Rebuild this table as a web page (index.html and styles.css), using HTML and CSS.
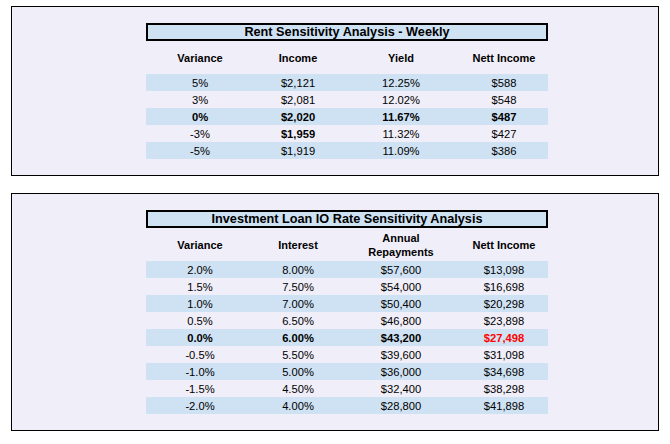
FILE: index.html
```html
<!DOCTYPE html>
<html>
<head>
<meta charset="utf-8">
<link rel="stylesheet" href="styles.css">
</head>
<body>
<div class="page">
  <section class="panel panel-rent">
    <div class="sheet">
      <div class="title">Rent Sensitivity Analysis - Weekly</div>
      <div class="row head">
        <div>Variance</div><div>Income</div><div>Yield</div><div>Nett Income</div>
      </div>
      <div class="row shade"><div>5%</div><div>$2,121</div><div>12.25%</div><div>$588</div></div>
      <div class="row"><div>3%</div><div>$2,081</div><div>12.02%</div><div>$548</div></div>
      <div class="row shade bold"><div>0%</div><div>$2,020</div><div>11.67%</div><div>$487</div></div>
      <div class="row"><div>-3%</div><div class="b">$1,959</div><div>11.32%</div><div>$427</div></div>
      <div class="row shade"><div>-5%</div><div>$1,919</div><div>11.09%</div><div>$386</div></div>
    </div>
  </section>
  <section class="panel panel-loan">
    <div class="sheet">
      <div class="title">Investment Loan IO Rate Sensitivity Analysis</div>
      <div class="row head">
        <div>Variance</div><div>Interest</div><div>Annual<br>Repayments</div><div>Nett Income</div>
      </div>
      <div class="row shade"><div>2.0%</div><div>8.00%</div><div>$57,600</div><div>$13,098</div></div>
      <div class="row"><div>1.5%</div><div>7.50%</div><div>$54,000</div><div>$16,698</div></div>
      <div class="row shade"><div>1.0%</div><div>7.00%</div><div>$50,400</div><div>$20,298</div></div>
      <div class="row"><div>0.5%</div><div>6.50%</div><div>$46,800</div><div>$23,898</div></div>
      <div class="row shade bold"><div>0.0%</div><div>6.00%</div><div>$43,200</div><div class="red">$27,498</div></div>
      <div class="row"><div>-0.5%</div><div>5.50%</div><div>$39,600</div><div>$31,098</div></div>
      <div class="row shade"><div>-1.0%</div><div>5.00%</div><div>$36,000</div><div>$34,698</div></div>
      <div class="row"><div>-1.5%</div><div>4.50%</div><div>$32,400</div><div>$38,298</div></div>
      <div class="row shade"><div>-2.0%</div><div>4.00%</div><div>$28,800</div><div>$41,898</div></div>
    </div>
  </section>
</div>
</body>
</html>
```

FILE: styles.css
```css
html, body {
  margin: 0;
  padding: 0;
  background: #ffffff;
}
body {
  font-family: "Liberation Sans", Arial, sans-serif;
  color: #000;
}
.page {
  padding: 6px 0 0 11px;
  display: flex;
  flex-direction: column;
  gap: 17px;
}
.panel {
  width: 512px;
  border: 1px solid #000;
  background: #f0eef8;
  padding: 16px 0 16px 134px;
  box-sizing: content-box;
}
.sheet {
  width: 402px;
  display: flex;
  flex-direction: column;
}
.title {
  height: 14px;
  border: 2px solid #000;
  background: #cfe2f3;
  font-weight: bold;
  font-size: 12.7px;
  line-height: 14px;
  text-align: center;
}
.row {
  display: grid;
  grid-template-columns: 108px 88px 118px 88px;
  height: 17px;
  align-items: center;
  font-size: 11.2px;
  line-height: 14px;
  text-align: center;
}
.row.head {
  height: 33px;
  font-weight: bold;
  font-size: 11px;
}
.shade {
  background: #cfe2f3;
}
.bold, .b {
  font-weight: bold;
}
.red {
  color: #ff0000;
}
```
